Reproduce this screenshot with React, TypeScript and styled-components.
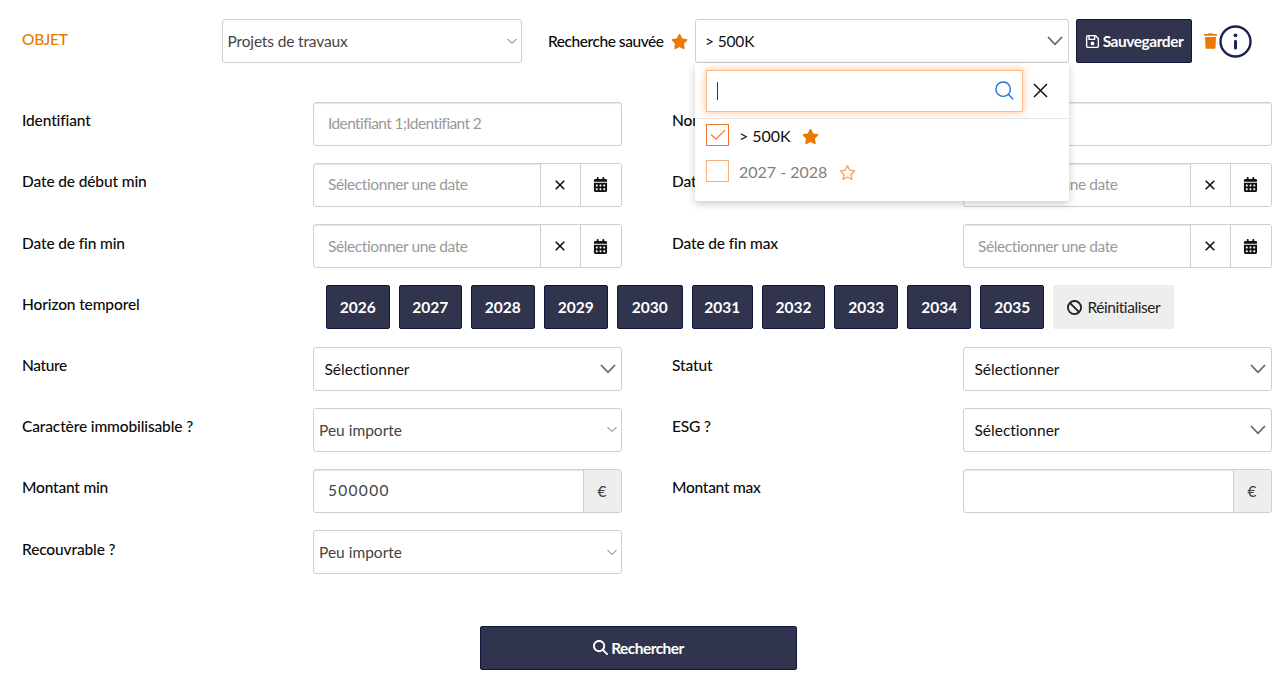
import React from "react";
import styled, { createGlobalStyle, css } from "styled-components";
import {
  FaStar,
  FaRegStar,
  FaRegFloppyDisk,
  FaCalendarDays,
  FaBan,
  FaMagnifyingGlass,
} from "react-icons/fa6";

const NAVY = "#30354d";
const ORANGE = "#e87a00";
const BORDER = "#cfcfcf";

const GlobalStyle = createGlobalStyle`
  *, *::before, *::after { box-sizing: border-box; }
  body {
    margin: 0;
    background: #fff;
    color: #0a0a0a;
    font: 15.5px/20px Lato, "Liberation Sans", sans-serif;
    font-variant-ligatures: none;
  }
  svg { flex: none; }
`;

const Page = styled.main`
  width: 1280px;
  height: 681px;
  overflow: hidden;
  padding: 19px 8.5px 0 22px;
`;

const Text = styled.span<{ $track?: number; $weight?: number; $size?: number }>`
  white-space: pre;
  letter-spacing: ${(p) => p.$track ?? 0}px;
  font-weight: ${(p) => p.$weight ?? 400};
  font-size: ${(p) => p.$size ?? 15.5}px;
`;

const Header = styled.header`
  display: flex;
  height: 44px;
  margin-bottom: 38.8px;
`;

const Title = styled.h1`
  width: 199.5px;
  margin: 0;
  padding-top: 10px;
  font: inherit;
  color: ${ORANGE};
`;

const Box = styled.div<{ $width: number; $pad?: number; $end?: number; $color?: string }>`
  display: flex;
  align-items: center;
  justify-content: space-between;
  position: relative;
  flex: none;
  width: ${(p) => p.$width}px;
  height: 44px;
  padding: 0 ${(p) => p.$end ?? 4}px 0 ${(p) => p.$pad ?? 5}px;
  border: 1px solid ${BORDER};
  border-radius: 3px;
  background: #fff;
  color: ${(p) => p.$color ?? "#444"};
`;

const SavedLabel = styled.div`
  display: flex;
  align-items: center;
  justify-content: space-between;
  width: 173.5px;
  padding: 0 7.5px 0 26.5px;
  svg { color: ${ORANGE}; }
`;

const solid = css`
  display: flex;
  align-items: center;
  justify-content: center;
  height: 44px;
  padding: 0;
  font: inherit;
  border: 1px solid #11163f;
  border-radius: 2px;
  background: ${NAVY};
  color: #fff;
`;

const SaveButton = styled.button`
  ${solid}
  width: 116px;
  margin-left: 7px;
  gap: 3px;
`;

const HeaderIcons = styled.div`
  display: flex;
  align-items: center;
  padding-left: 12px;
  gap: 2px;
`;

const Menu = styled.div`
  position: absolute;
  z-index: 2;
  top: 43px;
  left: -1px;
  width: 374px;
  height: 138px;
  background: #fff;
  border-radius: 3px;
  box-shadow: 0 3px 8px rgba(0, 0, 0, 0.2);
`;

const MenuSearch = styled.div`
  display: flex;
  align-items: center;
  height: 56px;
  padding: 0 20px 0 11px;
  gap: 10px;
  border-bottom: 1px solid #e6e6e6;
`;

const SearchField = styled.div`
  display: flex;
  align-items: center;
  justify-content: space-between;
  width: 317px;
  height: 42px;
  padding: 0 8px 0 9.5px;
  border: 1px solid #fbb98c;
  box-shadow: 0 0 8px rgba(250, 140, 60, 0.55);
`;

const Caret = styled.span`
  width: 1px;
  height: 18px;
  background: #333;
`;

const Option = styled.div<{ $on?: boolean }>`
  display: flex;
  align-items: center;
  height: 22px;
  margin: ${(p) => (p.$on ? "5px 0 0 11px" : "14px 0 0 11px")};
  color: ${(p) => (p.$on ? "#111" : "#808080")};
  span { position: relative; top: 1px; }
`;

const Check = styled.i<{ $on?: boolean }>`
  display: grid;
  place-items: center;
  width: 23px;
  height: 22px;
  margin-right: 10px;
  border: 1px solid ${(p) => (p.$on ? "#ef7333" : "#f8ae7c")};
`;

const OptionStar = styled.b<{ $on?: boolean }>`
  display: flex;
  margin: 2px 0 0 ${(p) => (p.$on ? 11 : 12)}px;
  color: ${(p) => (p.$on ? ORANGE : "#f4a76c")};
`;

const Form = styled.form`
  display: flex;
  flex-direction: column;
  gap: 17.2px;
`;

const Row = styled.div`
  display: flex;
  height: 44px;
`;

const Label = styled.label<{ $second?: boolean }>`
  width: 291px;
  padding-top: 8.5px;
  margin-left: ${(p) => (p.$second ? 50.5 : 0)}px;
  flex: none;
`;

const Input = styled.div`
  display: flex;
  flex: none;
  width: 308.5px;
  height: 44px;
  border: 1px solid ${BORDER};
  border-radius: 3px;
  box-shadow: inset 0 1px 1px rgba(0, 0, 0, 0.1);
  color: #444;
  overflow: hidden;
`;

const Value = styled.div<{ $muted?: boolean }>`
  flex: 1;
  padding: 10.5px 0 0 14px;
  color: ${(p) => (p.$muted ? "#999" : "#444")};
`;

const Addon = styled.div<{ $width: number; $fill?: boolean }>`
  display: grid;
  place-items: center;
  width: ${(p) => p.$width}px;
  border-left: 1px solid ${BORDER};
  background: ${(p) => (p.$fill ? "#eee" : "#fff")};
  color: ${(p) => (p.$fill ? "#444" : "#111")};
`;

const Years = styled.div`
  display: flex;
  gap: 9px;
  padding-left: 12.8px;
`;

const YearButton = styled.button<{ $width: number }>`
  ${solid}
  width: ${(p) => p.$width}px;
`;

const ResetButton = styled.button`
  ${solid}
  width: 121px;
  gap: 5px;
  border-color: #eee;
  background: #eee;
  color: #222;
`;

const SubmitButton = styled.button`
  ${solid}
  width: 317px;
  margin: 51.5px 0 0 458px;
  gap: 3px;
`;

const Chevron = ({ small }: { small?: boolean }) =>
  small ? (
    <svg width="10" height="7" viewBox="0 0 10 7" fill="none" stroke="#666">
      <path d="M.5 1 5 5.5 9.5 1" />
    </svg>
  ) : (
    <svg width="16" height="10" viewBox="0 0 16 10" fill="none" stroke="#5b6478" strokeWidth="1.7">
      <path d="M1 1 8 8.3 15 1" />
    </svg>
  );

const ClearIcon = () => (
  <svg width="10" height="10" viewBox="0 0 10 10" fill="none" stroke="#111" strokeWidth="1.6">
    <path d="m.7.7 8.6 8.6M9.3.7.7 9.3" />
  </svg>
);

const TrashIcon = () => (
  <svg width="13" height="16" viewBox="0 0 13 16" fill={ORANGE}>
    <path d="M0 1.6q0-.6.6-.6H4l.6-.8h3.8L9 1h3.4q.6 0 .6.6v1.2H0zM1 4h11l-.5 10.6q-.1 1.2-1.3 1.2H2.8q-1.2 0-1.3-1.2z" />
  </svg>
);

const InfoIcon = () => (
  <svg width="33" height="33" viewBox="0 0 33 33" fill="none" stroke="#1d2350">
    <circle cx="16.5" cy="16.5" r="15" strokeWidth="2.4" />
    <circle cx="16.5" cy="10.3" r="1.9" fill="#1d2350" stroke="none" />
    <path d="M16.5 16.2v6.8" strokeWidth="3" strokeLinecap="round" />
  </svg>
);

const DateInput = () => (
  <Input>
    <Value $muted><Text $track={-0.4}>Sélectionner une date</Text></Value>
    <Addon $width={39.5}><ClearIcon /></Addon>
    <Addon $width={41}><FaCalendarDays size={15} /></Addon>
  </Input>
);

const AmountInput = ({ value }: { value?: string }) => (
  <Input>
    <Value><Text $track={1.3}>{value}</Text></Value>
    <Addon $width={38} $fill>€</Addon>
  </Input>
);

const MultiSelect = () => (
  <Box $width={308.5} $pad={10.5} $end={4.5} $color="#111">
    <Text>Sélectionner</Text>
    <Chevron />
  </Box>
);

const NativeSelect = () => (
  <Box $width={308.5}>
    <Text>Peu importe</Text>
    <Chevron small />
  </Box>
);

const YEARS: [number, number][] = [
  [2026, 64], [2027, 63], [2028, 64], [2029, 64], [2030, 66],
  [2031, 61], [2032, 63.5], [2033, 64], [2034, 64], [2035, 64],
];

const FieldLabel = ({ children, track = -0.13, second }: { children: string; track?: number; second?: boolean }) => (
  <Label $second={second}><Text $track={track} $weight={500}>{children}</Text></Label>
);

export default function App() {
  return (
    <Page>
      <GlobalStyle />
      <Header>
        <Title><Text $weight={500} $track={-0.3}>OBJET</Text></Title>
        <Box $width={300}>
          <Text $track={-0.15}>Projets de travaux</Text>
          <Chevron small />
        </Box>
        <SavedLabel>
          <Text $weight={500} $track={-0.45}>Recherche sauvée</Text>
          <FaStar size={17} />
        </SavedLabel>
        <Box $width={374} $pad={9} $end={5} $color="#111">
          <Text $track={-0.15}>&gt; 500K</Text>
          <Chevron />
          <Menu>
            <MenuSearch>
              <SearchField>
                <Caret />
                <svg width="19" height="19" viewBox="0 0 19 19" fill="none" stroke="#1976d8" strokeWidth="1.4">
                  <circle cx="8.2" cy="8.2" r="7.2" />
                  <path d="m13.3 13.3 4.9 4.9" />
                </svg>
              </SearchField>
              <svg width="15" height="15" viewBox="0 0 15 15" fill="none" stroke="#111" strokeWidth="1.5">
                <path d="m1 1 13 13M14 1 1 14" />
              </svg>
            </MenuSearch>
            <Option $on>
              <Check $on>
                <svg width="16" height="12" viewBox="0 0 16 12" fill="none" stroke="#ef7333" strokeWidth="1.1">
                  <path d="m1 5.5 5 4.7L15 .8" />
                </svg>
              </Check>
              <Text $size={16} $track={-0.05}>&gt; 500K</Text>
              <OptionStar $on><FaStar size={17} /></OptionStar>
            </Option>
            <Option>
              <Check />
              <Text $size={16}>2027 - 2028</Text>
              <OptionStar><FaRegStar size={17} /></OptionStar>
            </Option>
          </Menu>
        </Box>
        <SaveButton><FaRegFloppyDisk size={15} /><Text $weight={700} $track={-0.45}>Sauvegarder</Text></SaveButton>
        <HeaderIcons><TrashIcon /><InfoIcon /></HeaderIcons>
      </Header>

      <Form>
        <Row>
          <FieldLabel>Identifiant</FieldLabel>
          <Input><Value $muted><Text $track={-0.6}>Identifiant 1;Identifiant 2</Text></Value></Input>
          <FieldLabel second>Nom</FieldLabel>
          <Input />
        </Row>
        <Row>
          <FieldLabel>Date de début min</FieldLabel>
          <DateInput />
          <FieldLabel second>Date de début max</FieldLabel>
          <DateInput />
        </Row>
        <Row>
          <FieldLabel>Date de fin min</FieldLabel>
          <DateInput />
          <FieldLabel second>Date de fin max</FieldLabel>
          <DateInput />
        </Row>
        <Row>
          <FieldLabel>Horizon temporel</FieldLabel>
          <Years>
            {YEARS.map(([year, width]) => (
              <YearButton key={year} type="button" $width={width}><Text $weight={700}>{year}</Text></YearButton>
            ))}
            <ResetButton type="button"><FaBan size={15} /><Text $track={-0.43}>Réinitialiser</Text></ResetButton>
          </Years>
        </Row>
        <Row>
          <FieldLabel track={-0.4}>Nature</FieldLabel>
          <MultiSelect />
          <FieldLabel second>Statut</FieldLabel>
          <MultiSelect />
        </Row>
        <Row>
          <FieldLabel>Caractère immobilisable ?</FieldLabel>
          <NativeSelect />
          <FieldLabel second>ESG ?</FieldLabel>
          <MultiSelect />
        </Row>
        <Row>
          <FieldLabel track={-0.2}>Montant min</FieldLabel>
          <AmountInput value="500000" />
          <FieldLabel second track={-0.27}>Montant max</FieldLabel>
          <AmountInput />
        </Row>
        <Row>
          <FieldLabel>Recouvrable ?</FieldLabel>
          <NativeSelect />
        </Row>
      </Form>
      <SubmitButton type="submit"><FaMagnifyingGlass size={15} /><Text $weight={700} $track={-0.55}>Rechercher</Text></SubmitButton>
    </Page>
  );
}
